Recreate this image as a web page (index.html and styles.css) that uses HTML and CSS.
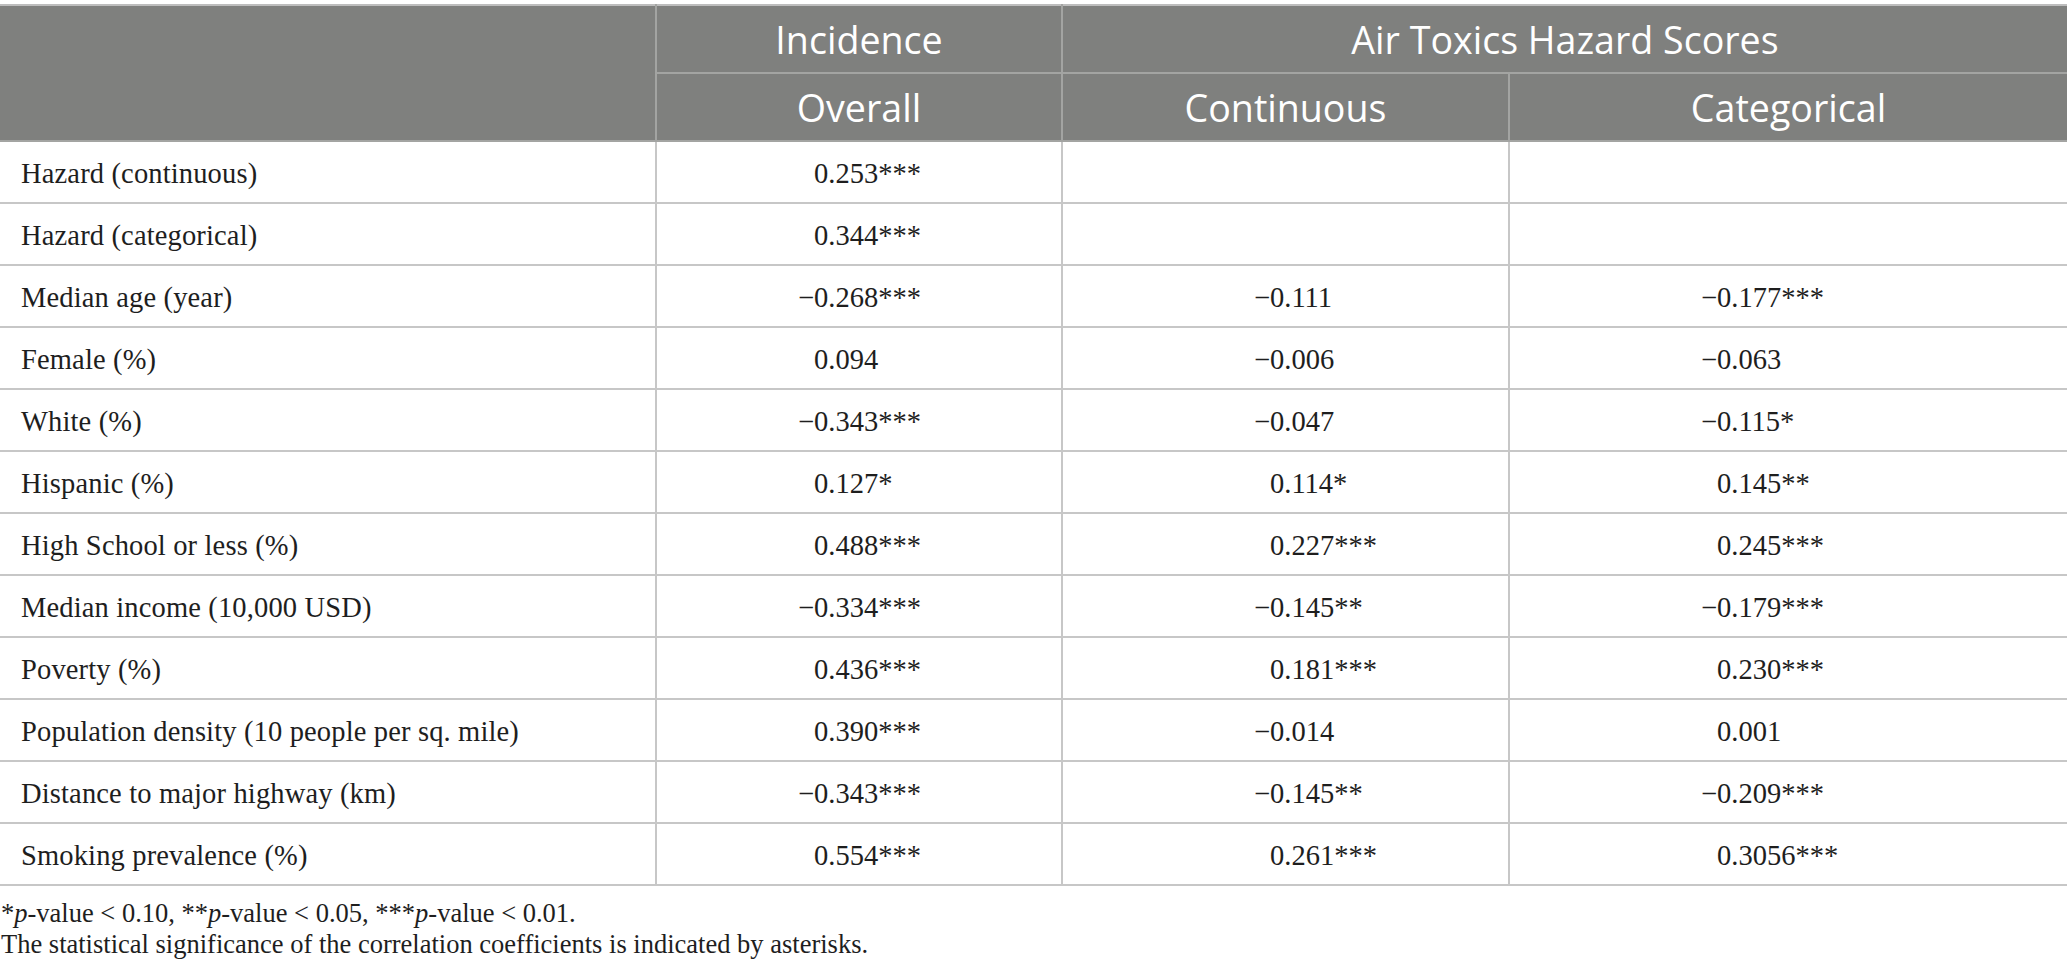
FILE: index.html
```html
<!DOCTYPE html>
<html>
<head>
<meta charset="utf-8">
<link rel="stylesheet" href="styles.css">
</head>
<body>
<table class="tbl">
  <colgroup>
    <col class="c0"><col class="c1"><col class="c2"><col class="c3">
  </colgroup>
  <thead>
    <tr class="h1">
      <th rowspan="2"></th>
      <th>Incidence</th>
      <th colspan="2">Air Toxics Hazard Scores</th>
    </tr>
    <tr class="h2">
      <th>Overall</th>
      <th>Continuous</th>
      <th>Categorical</th>
    </tr>
  </thead>
  <tbody>
    <tr><td class="lbl">Hazard (continuous)</td><td class="n1">0.253***</td><td class="n2"></td><td class="n2"></td></tr>
    <tr><td class="lbl">Hazard (categorical)</td><td class="n1">0.344***</td><td class="n2"></td><td class="n2"></td></tr>
    <tr><td class="lbl">Median age (year)</td><td class="n1"><span class="neg">−</span>0.268***</td><td class="n2"><span class="neg">−</span>0.111</td><td class="n2"><span class="neg">−</span>0.177***</td></tr>
    <tr><td class="lbl">Female (%)</td><td class="n1">0.094</td><td class="n2"><span class="neg">−</span>0.006</td><td class="n2"><span class="neg">−</span>0.063</td></tr>
    <tr><td class="lbl">White (%)</td><td class="n1"><span class="neg">−</span>0.343***</td><td class="n2"><span class="neg">−</span>0.047</td><td class="n2"><span class="neg">−</span>0.115*</td></tr>
    <tr><td class="lbl">Hispanic (%)</td><td class="n1">0.127*</td><td class="n2">0.114*</td><td class="n2">0.145**</td></tr>
    <tr><td class="lbl">High School or less (%)</td><td class="n1">0.488***</td><td class="n2">0.227***</td><td class="n2">0.245***</td></tr>
    <tr><td class="lbl">Median income (10,000 USD)</td><td class="n1"><span class="neg">−</span>0.334***</td><td class="n2"><span class="neg">−</span>0.145**</td><td class="n2"><span class="neg">−</span>0.179***</td></tr>
    <tr><td class="lbl">Poverty (%)</td><td class="n1">0.436***</td><td class="n2">0.181***</td><td class="n2">0.230***</td></tr>
    <tr><td class="lbl">Population density (10 people per sq. mile)</td><td class="n1">0.390***</td><td class="n2"><span class="neg">−</span>0.014</td><td class="n2">0.001</td></tr>
    <tr><td class="lbl">Distance to major highway (km)</td><td class="n1"><span class="neg">−</span>0.343***</td><td class="n2"><span class="neg">−</span>0.145**</td><td class="n2"><span class="neg">−</span>0.209***</td></tr>
    <tr><td class="lbl">Smoking prevalence (%)</td><td class="n1">0.554***</td><td class="n2">0.261***</td><td class="n2">0.3056***</td></tr>
  </tbody>
</table>
<div class="notes">
  <p>*<i>p</i>-value &lt; 0.10, **<i>p</i>-value &lt; 0.05, ***<i>p</i>-value &lt; 0.01.</p>
  <p>The statistical significance of the correlation coefficients is indicated by asterisks.</p>
</div>
</body>
</html>
```
FILE: styles.css
```css
html, body {
  margin: 0;
  padding: 0;
  background: #ffffff;
}
body {
  font-family: "Liberation Serif", "Times New Roman", serif;
  color: #1e1e1e;
}
.tbl {
  margin-top: 4px;
  width: 2067px;
  border-collapse: collapse;
  table-layout: fixed;
}
.c0 { width: 656px; }
.c1 { width: 406px; }
.c2 { width: 447px; }
.c3 { width: 558px; }

.tbl thead th {
  background: #7f807e;
  color: #ffffff;
  font-family: "Open Sans", "Noto Sans", sans-serif;
  font-weight: 400;
  font-size: 37.6px;
  text-align: center;
  padding: 0;
  border: 2px solid #a3a4a2;
}
.tbl thead tr:first-child th {
  border-top: 2px solid #bdbdbd;
}
.tbl thead th:first-child {
  border-left: none;
}
.tbl thead th:last-child {
  border-right: none;
}
.h1 th { height: 66px; }
.h2 th { height: 66px; }

.tbl tbody tr {
  height: 62px;
}
.tbl tbody td {
  padding: 4px 0 0 0;
  border: 2px solid #c7c7c7;
  font-size: 28.5px;
  vertical-align: middle;
  white-space: nowrap;
}
.tbl tbody td:first-child { border-left: none; }
.tbl tbody td:last-child { border-right: none; }

.lbl {
  padding-left: 21px !important;
  letter-spacing: 0.15px;
}
.n1 { padding-left: 157px !important; }
.n2 { padding-left: 207px !important; }
.neg {
  display: inline-block;
  width: 16px;
  margin-left: -16px;
  text-align: left;
}

.notes {
  margin-top: 12px;
  font-size: 26.5px;
  line-height: 31px;
}
.notes p {
  margin: 0;
  padding-left: 1px;
}
```
